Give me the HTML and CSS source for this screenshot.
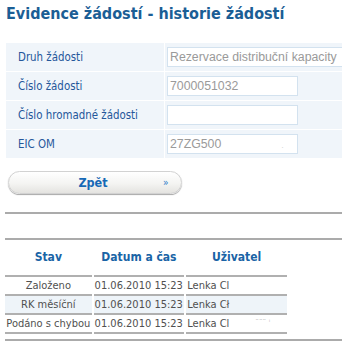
FILE: index.html
```html
<!DOCTYPE html>
<html lang="cs">
<head>
<meta charset="utf-8">
<title>Evidence žádostí - historie žádostí</title>
<link rel="stylesheet" href="styles.css">
</head>
<body>
<div class="page">
  <h1 class="title">Evidence žádostí - historie žádostí</h1>

  <table class="form">
    <tr>
      <td class="label">Druh žádosti</td>
      <td class="field"><div class="input wide">Rezervace distribuční kapacity</div></td>
    </tr>
    <tr>
      <td class="label">Číslo žádosti</td>
      <td class="field"><div class="input">7000051032</div></td>
    </tr>
    <tr>
      <td class="label">Číslo hromadné žádosti</td>
      <td class="field"><div class="input"></div></td>
    </tr>
    <tr>
      <td class="label">EIC OM</td>
      <td class="field"><div class="input">27ZG500<span class="faint">.</span></div></td>
    </tr>
  </table>

  <div class="actions">
    <button class="btn" type="button"><span class="btn-text">Zpět</span><span class="btn-arrow">»</span></button>
  </div>

  <div class="rule first"></div>
  <div class="rule second"></div>

  <table class="history">
    <thead>
      <tr><th>Stav</th><th>Datum a čas</th><th>Uživatel</th></tr>
    </thead>
    <tbody>
      <tr><td class="state">Založeno</td><td>01.06.2010 15:23</td><td>Lenka Cl</td></tr>
      <tr class="alt"><td class="state">RK měsíční</td><td>01.06.2010 15:23</td><td>Lenka Cł</td></tr>
      <tr><td class="state">Podáno s chybou</td><td>01.06.2010 15:23</td><td>Lenka Cl<span class="ghost">¨¨¨ ˈ</span></td></tr>
    </tbody>
  </table>
  <div class="rule last"></div>
</div>
</body>
</html>
```
FILE: styles.css
```css
html, body {
  margin: 0;
  padding: 0;
  overflow: hidden;
  background: #fff;
}
.page {
  width: 420px;
  padding: 0 0 0 5px;
  font-family: "DejaVu Sans Condensed", "DejaVu Sans", sans-serif;
}
.title {
  margin: 0;
  padding: 4px 0 0 1px;
  height: 40px;
  box-sizing: border-box;
  font-size: 16px;
  font-weight: bold;
  color: #1b5e95;
}
.form {
  border-collapse: separate;
  border-spacing: 1px 1px;
  margin-top: 2px;
  width: 420px;
  margin-left: 0;
}
.form td {
  background: #f0f5fa;
  height: 28px;
  padding: 0;
}
.form .label {
  width: 146px;
  padding-left: 12px;
  font-size: 11.4px;
  color: #25579a;
}
.form .field {
  padding-left: 2px;
}
.input {
  box-sizing: border-box;
  width: 131px;
  height: 20px;
  border: 1px solid #d3e2ef;
  background: #fff;
  font-family: "Liberation Sans", Arial, sans-serif;
  font-size: 12.3px;
  line-height: 18px;
  color: #9a9a9a;
  padding-left: 2px;
  white-space: nowrap;
  overflow: hidden;
}
.input.wide {
  width: 240px;
}
.faint {
  color: #d8d8d8;
  margin-left: 60px;
  font-size: 9px;
}
.actions {
  padding: 12px 0 0 3px;
  height: 36px;
}
.btn {
  display: flex;
  align-items: center;
  width: 174px;
  height: 23px;
  padding: 0;
  border: 1px solid #d2d2d2;
  border-radius: 12px;
  background: linear-gradient(#ffffff, #f4f4f2 55%, #e4e3e0);
  box-shadow: 0 1px 1px #a8a8a8;
  font-family: "DejaVu Sans Condensed", "DejaVu Sans", sans-serif;
  cursor: pointer;
}
.btn-text {
  flex: 1;
  text-align: center;
  padding-left: 14px;
  font-size: 12.5px;
  font-weight: bold;
  color: #1669b6;
}
.btn-arrow {
  width: 18px;
  font-size: 10px;
  color: #2a7ac8;
  text-align: left;
}
.rule {
  height: 2px;
  background: #ababab;
}
.rule.first {
  margin-top: 5px;
}
.rule.second {
  margin-top: 24px;
}
.history {
  border-collapse: separate;
  border-spacing: 2px 0;
  margin-left: -2px;
  table-layout: fixed;
  width: 286px;
  font-size: 11px;
}
.history th,
.history td {
  box-sizing: border-box;
}
.history th {
  height: 37px;
  color: #1a64a6;
  font-weight: bold;
  font-size: 12px;
  text-align: center;
  border-bottom: 2px solid #b0b0b0;
  padding: 0 0 2px;
}
.history th:nth-child(1) { width: 86px; }
.history th:nth-child(2) { width: 90px; }
.history th:nth-child(3) { width: 100px; }
.history td {
  height: 19px;
  padding: 0 0 0 1px;
  line-height: 16px;
  color: #505050;
  border-bottom: 2px solid #b0b0b0;
  white-space: nowrap;
  overflow: hidden;
  text-align: left;
}
.history td.state {
  text-align: center;
  padding: 0;
}
.history tr.alt td {
  background: #eef4f9;
}
.ghost {
  color: #c8c8c8;
  font-size: 8px;
  margin-left: 26px;
  vertical-align: top;
}
.rule.last {
  margin-top: 5px;
}
```
